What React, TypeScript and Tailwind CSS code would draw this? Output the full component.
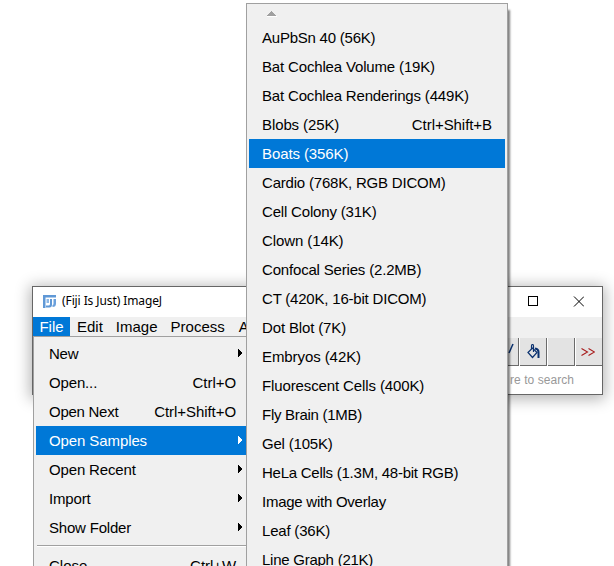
type Entry = { label: string; shortcut?: string; submenu?: boolean; selected?: boolean; tracking?: string };

const fileMenu: Entry[] = [
  { label: 'New', submenu: true, tracking: 'tracking-[-0.25px]' },
  { label: 'Open...', shortcut: 'Ctrl+O', tracking: 'tracking-[-0.15px]' },
  { label: 'Open Next', shortcut: 'Ctrl+Shift+O', tracking: 'tracking-[-0.27px]' },
  { label: 'Open Samples', submenu: true, selected: true, tracking: 'tracking-[-0.1px]' },
  { label: 'Open Recent', submenu: true, tracking: 'tracking-[-0.15px]' },
  { label: 'Import', submenu: true, tracking: 'tracking-[-0.15px]' },
  { label: 'Show Folder', submenu: true, tracking: 'tracking-[-0.2px]' },
];

const samples: Entry[] = [
  { label: 'AuPbSn 40 (56K)', tracking: 'tracking-[-0.23px]' },
  { label: 'Bat Cochlea Volume (19K)', tracking: 'tracking-[-0.16px]' },
  { label: 'Bat Cochlea Renderings (449K)', tracking: 'tracking-[-0.17px]' },
  { label: 'Blobs (25K)', shortcut: 'Ctrl+Shift+B', tracking: 'tracking-[-0.1px]' },
  { label: 'Boats (356K)', selected: true, tracking: 'tracking-[-0.1px]' },
  { label: 'Cardio (768K, RGB DICOM)', tracking: 'tracking-[-0.2px]' },
  { label: 'Cell Colony (31K)', tracking: 'tracking-[-0.18px]' },
  { label: 'Clown (14K)', tracking: 'tracking-[-0.1px]' },
  { label: 'Confocal Series (2.2MB)', tracking: 'tracking-[-0.18px]' },
  { label: 'CT (420K, 16-bit DICOM)', tracking: 'tracking-[-0.2px]' },
  { label: 'Dot Blot (7K)', tracking: 'tracking-[-0.14px]' },
  { label: 'Embryos (42K)', tracking: 'tracking-[-0.08px]' },
  { label: 'Fluorescent Cells (400K)', tracking: 'tracking-[-0.12px]' },
  { label: 'Fly Brain (1MB)', tracking: 'tracking-[-0.28px]' },
  { label: 'Gel (105K)', tracking: 'tracking-[-0.2px]' },
  { label: 'HeLa Cells (1.3M, 48-bit RGB)', tracking: 'tracking-[-0.25px]' },
  { label: 'Image with Overlay', tracking: 'tracking-[-0.25px]' },
  { label: 'Leaf (36K)', tracking: 'tracking-[-0.2px]' },
  { label: 'Line Graph (21K)', tracking: 'tracking-[-0.25px]' },
];

function Row({ entry, className }: { entry: Entry; className: string }) {
  return (
    <div
      className={`flex h-[29px] shrink-0 items-center justify-between whitespace-pre pl-[13px] ${className} ${
        entry.selected ? 'bg-[#0078d7] text-white' : 'text-black'
      }`}
    >
      <span className={entry.tracking}>{entry.label}</span>
      {entry.shortcut && <span className="tracking-[-0.06px]">{entry.shortcut}</span>}
      {entry.submenu && (
        <svg width="4" height="8" viewBox="0 0 4 8" className="mr-[-6px] mb-[2px] shrink-0" fill="currentColor" shapeRendering="crispEdges">
          <path d="M0 0h1v1h1v1h1v1h1v2h-1v1h-1v1h-1v1h-1z" />
        </svg>
      )}
    </div>
  );
}

function FijiLogo() {
  return (
    <svg width="14" height="14" viewBox="0 0 14 14">
      <path d="M0 0h13v2.500H2.500V13H0z" fill="#5f98d6" />
      <path d="M3.500 4H6v4H3.500z" fill="#8db8e6" />
      <path d="M7 4h2v5.500q0 3-2.500 3H3v-2h2.500q1.500 0 1.500-1.500z" fill="#5f98d6" />
      <path d="M10.500 4H13v4.500q0 3.500-3.500 3.500v-2q1 0 1-1.500z" fill="#6aa0dc" />
    </svg>
  );
}

function BucketIcon() {
  return (
    <svg width="13" height="15" viewBox="0 0 13 15" fill="none" stroke="#0b3270" strokeWidth="1.200">
      <path d="M1 8.500L5.500 4L10 8.500L5.500 13.500Z" />
      <path d="M4.500 5V2q0-1.500 1-1.500T6.500 2v6" />
      <path d="M8 4.500q3.500 0.500 3.500 3.500v6" strokeWidth="2" />
    </svg>
  );
}

const tool = 'flex h-[28px] items-center justify-center border-r border-b border-[#6b6b6b] bg-[#e3e3e3]';

export default function App() {
  return (
    <div className="relative h-[566px] w-[614px] overflow-hidden bg-white pt-[286px] pl-[32px] font-['Liberation_Sans',Arial,sans-serif] text-[15px] leading-[19px]">
      <div className="flex h-[109px] w-[571px] flex-col border border-[#666] bg-white shadow-[0_2px_14px_2px_rgba(0,0,0,0.3)]">
        <div className="flex h-[30px] shrink-0 items-center pl-[10px]">
          <FijiLogo />
          <span className="mb-[3px] ml-[5px] flex-1 whitespace-pre font-['Noto_Sans',sans-serif] text-[12px] tracking-[-0.1px] text-black">(Fiji Is Just) ImageJ</span>
          <svg width="56" height="11" viewBox="0 0 56 11" className="mr-[18px] mb-[2px]" fill="none" stroke="#000">
            <rect x="0.5" y="0.5" width="9" height="9" />
            <path d="M46 0.500L56 10.500M56 0.500L46 10.500" />
          </svg>
        </div>
        <div className="flex h-[21px] w-[214px] shrink-0 overflow-hidden bg-[#f0f0f0] whitespace-pre shadow-[355px_0_0_#f0f0f0]">
          <span className="flex h-[19px] w-[37px] shrink-0 items-center justify-center bg-[#0078d7] text-white">File</span>
          <span className="ml-[7px]">Edit</span>
          <span className="ml-[13px]">Image</span>
          <span className="ml-[13px]">Process</span>
          <span className="ml-[14px]">A</span>
        </div>
        <div className="flex h-[28px] shrink-0 justify-end gap-px bg-white">
          <div className={`${tool} w-[27px]`}>
            <svg width="12" height="14" viewBox="0 0 12 14" className="ml-[11px] mb-[6px]" stroke="#0b3270" strokeWidth="1.500">
              <path d="M4 11L8 2" />
            </svg>
          </div>
          <div className={`${tool} w-[27px]`}><BucketIcon /></div>
          <div className={`${tool} w-[27px]`} />
          <div className={`${tool} w-[26px] border-r-0`}>
            <svg width="14" height="8" viewBox="0 0 14 8" className="mr-[2px]" fill="none" stroke="#a81c1c" strokeWidth="1.100">
              <path d="M0.500 0.500L6.500 4L0.500 7.500M7.500 0.500L13.500 4L7.500 7.500" />
            </svg>
          </div>
        </div>
        <div className="flex flex-1 items-center justify-end pr-[28px] text-[12px] tracking-[0.05px] text-[#999]">re to search</div>
      </div>

      <div className="absolute top-[336px] left-[33px] flex h-[240px] w-[222px] flex-col border border-[#a0a0a0] bg-[#f0f0f0] pt-[2px] pl-[2px]">
        {fileMenu.map((e) => (
          <Row key={e.label} entry={e} className="pr-[18px]" />
        ))}
        <div className="mt-[3px] mb-[4px] ml-px h-[2px] shrink-0 border-t border-b border-t-[#a0a0a0] border-b-white" />
        <Row entry={{ label: 'Close', shortcut: 'Ctrl+W' }} className="pr-[18px]" />
      </div>

      <div className="absolute top-[3px] left-[246px] flex h-[580px] w-[262px] flex-col border border-[#a0a0a0] bg-[#f0f0f0] px-[2px] shadow-[3px_6px_2px_-1px_rgba(0,0,0,0.5)]">
        <div className="h-[19px] shrink-0 pt-[7px] pl-[18px]">
          <svg width="10" height="6" viewBox="0 0 10 6" shapeRendering="crispEdges">
            <path d="M0 6h10v-1h-1v-1h-9z" fill="#fff" />
            <path d="M4 0h1v1h1v1h1v1h1v1h1v1H0v-1h1v-1h1v-1h1v-1h1z" fill="#a0a0a0" />
          </svg>
        </div>
        {samples.map((e) => (
          <Row key={e.label} entry={e} className="pr-[13px]" />
        ))}
      </div>
    </div>
  );
}
